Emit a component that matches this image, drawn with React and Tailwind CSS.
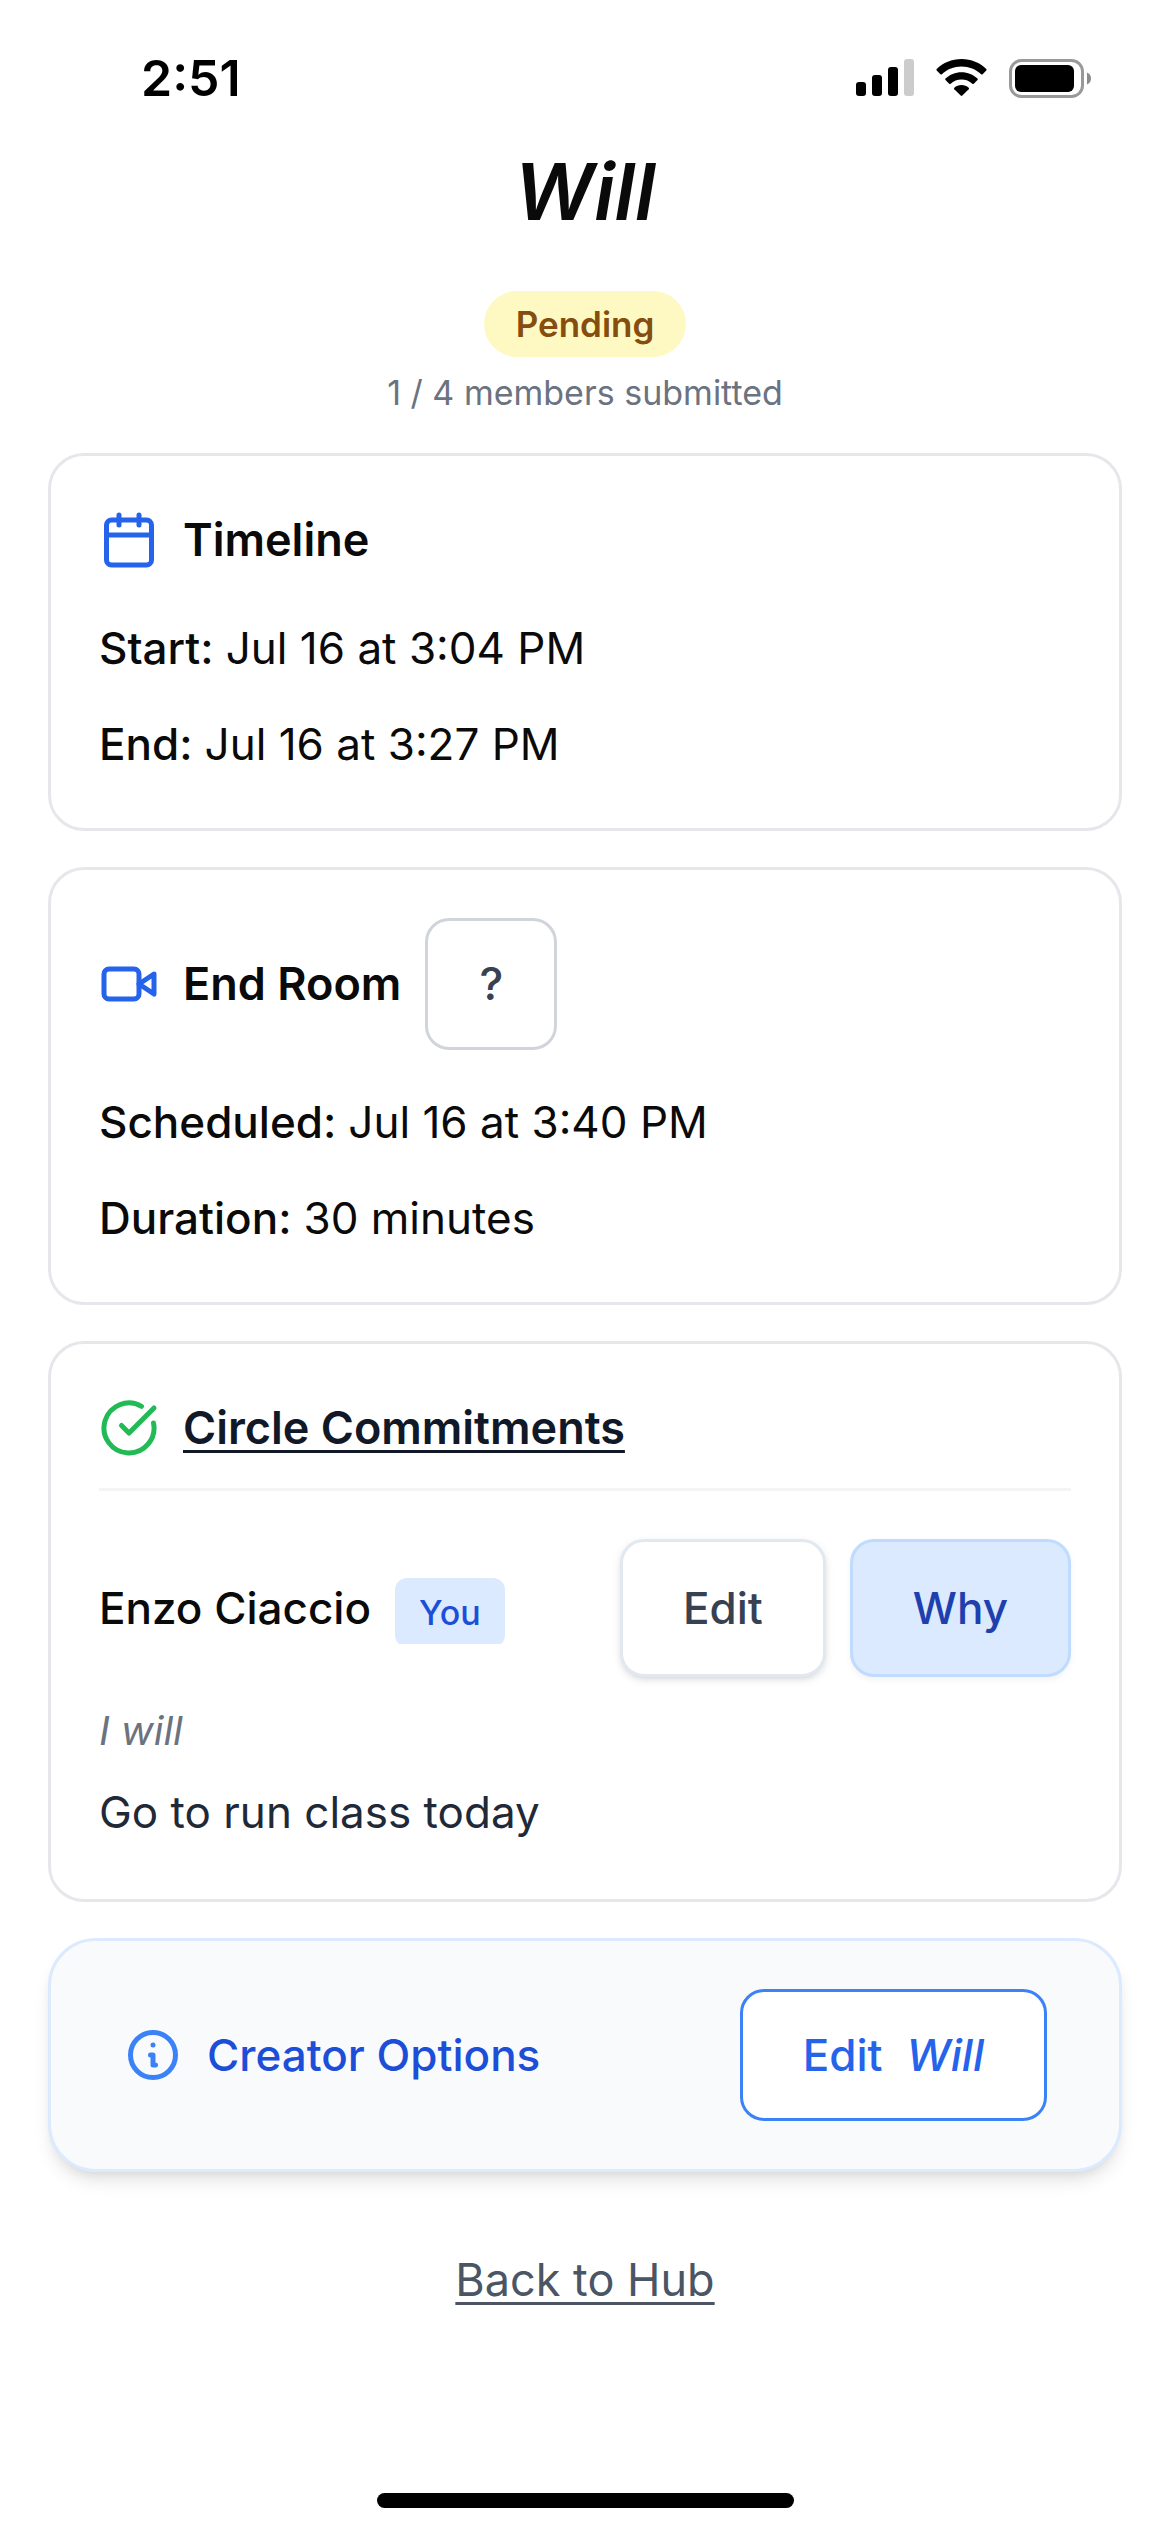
const iconProps = {
  viewBox: "0 0 24 24",
  fill: "none",
  stroke: "currentColor",
  strokeWidth: 2,
  strokeLinecap: "round",
  strokeLinejoin: "round",
  "aria-hidden": true,
};

function CalendarIcon() {
  return (
    <svg {...iconProps} className="size-15 shrink-0 text-[#2563eb]">
      <path d="M8 2v4M16 2v4M3 10h18" />
      <rect x="3" y="4" width="18" height="18" rx="2" />
    </svg>
  );
}

function VideoIcon() {
  return (
    <svg {...iconProps} className="size-15 shrink-0 text-[#2563eb]">
      <path d="m22 8-6 4 6 4V8Z" />
      <rect x="2" y="6" width="14" height="12" rx="2" />
    </svg>
  );
}

function CheckIcon() {
  return (
    <svg {...iconProps} className="size-15 shrink-0 text-[#21ba55]">
      <path d="M21.801 10A10 10 0 1 1 17 3.335" />
      <path d="m9 11 3 3L22 4" />
    </svg>
  );
}

function InfoIcon() {
  return (
    <svg {...iconProps} className="size-15 shrink-0 text-[#3b82f6]">
      <path d="M13 16h-1v-4h-1m1-4h.01M21 12a9 9 0 11-18 0 9 9 0 0118 0z" />
    </svg>
  );
}

function StatusBar() {
  return (
    <div className="flex h-[156px] items-center justify-between pr-[78px] pl-[141px]">
      <span className="text-[50px] leading-none font-semibold text-black">2:51</span>
      <div className="flex items-center">
        <svg viewBox="0 0 58 38" className="mr-[22px] h-[38px] w-[58px]" aria-hidden="true">
          <rect x="0" y="23" width="10" height="14" rx="3" />
          <rect x="16" y="16" width="10" height="21" rx="3" />
          <rect x="32" y="8" width="10" height="29" rx="3" />
          <rect x="48" y="0" width="10" height="37" rx="3" fill="#cccccc" />
        </svg>
        <svg viewBox="0 0 51 38" className="mr-[22px] h-[38px] w-[51px]" aria-hidden="true">
          <path d="M25.500 0C35.200 0 44 3.800 50.300 9.900Q51 10.700 50.300 11.500L46.600 15.200Q45.900 15.900 45.100 15.200C39.900 10.300 33 7.500 25.500 7.500S11.100 10.300 5.900 15.200Q5.100 15.900 4.400 15.200L.7 11.500Q0 10.700.7 9.900C7 3.800 15.800 0 25.500 0Z" />
          <path d="M25.500 13.200C31.700 13.200 37.300 15.600 41.500 19.500Q42.200 20.200 41.500 21L37.800 24.700Q37.100 25.400 36.300 24.700C33.500 22.100 29.700 20.500 25.500 20.500S17.500 22.100 14.700 24.700Q13.900 25.400 13.200 24.700L9.500 21Q8.800 20.200 9.500 19.500C13.700 15.600 19.300 13.200 25.500 13.200Z" />
          <path d="M25.500 26C28.300 26 30.800 27 32.700 28.700Q33.400 29.400 32.700 30.200L26.300 36.600Q25.500 37.300 24.700 36.600L18.300 30.200Q17.600 29.400 18.300 28.700C20.200 27 22.700 26 25.500 26Z" />
        </svg>
        <svg viewBox="0 0 83 39" className="h-[39px] w-[83px]" aria-hidden="true">
          <rect x="1.500" y="1.500" width="72" height="36" rx="11" fill="none" stroke="#999999" strokeWidth="3" />
          <rect x="6" y="6" width="59" height="27" rx="6" />
          <path d="M78 13.500C80.500 14.500 82 16.800 82 19.500S80.500 24.500 78 25.500Z" fill="#8c8c8c" />
        </svg>
      </div>
    </div>
  );
}

function Card({ children }) {
  return <section className="rounded-[36px] border-3 border-[#e5e7eb] bg-white p-12">{children}</section>;
}

function Fact({ label, value }) {
  return (
    <div className="flex gap-3">
      <dt className="font-medium">{label}</dt>
      <dd>{value}</dd>
    </div>
  );
}

export default function App() {
  return (
    <div className="flex min-h-screen flex-col bg-white font-[Inter,sans-serif] text-[44px] leading-[72px] text-[#0a0a0a]">
      <StatusBar />

      <main className="flex flex-1 flex-col px-12">
        <header className="flex flex-col items-center">
          <h1 className="text-[78px] leading-[72px] font-semibold italic">Will</h1>
          <span className="mt-[63px] rounded-full bg-[#fef9c3] px-8 text-[35px] leading-[66px] font-semibold text-[#854d0e]">
            Pending
          </span>
          <p className="mt-3 text-[34px] leading-[48px] text-[#6b7280]">1 / 4 members submitted</p>
        </header>

        <div className="mt-9 flex flex-col gap-9">
          <Card>
            <div className="flex items-center gap-6">
              <CalendarIcon />
              <h2 className="text-[45px] font-semibold">Timeline</h2>
            </div>
            <dl className="mt-9 flex flex-col gap-6">
              <Fact label="Start:" value="Jul 16 at 3:04 PM" />
              <Fact label="End:" value="Jul 16 at 3:27 PM" />
            </dl>
          </Card>

          <Card>
            <div className="flex items-center gap-6">
              <VideoIcon />
              <h2 className="text-[45px] font-semibold">End Room</h2>
              <button
                type="button"
                className="size-[132px] rounded-3xl border-3 border-[#d1d5db] bg-white text-[45px] font-medium text-[#374151]"
              >
                ?
              </button>
            </div>
            <dl className="mt-9 flex flex-col gap-6">
              <Fact label="Scheduled:" value="Jul 16 at 3:40 PM" />
              <Fact label="Duration:" value="30 minutes" />
            </dl>
          </Card>

          <Card>
            <div className="flex items-center gap-6 border-b-3 border-[#f3f4f6] pb-6">
              <CheckIcon />
              <h2 className="text-[45px] font-semibold text-[#111827] underline decoration-3 underline-offset-6">
                Circle Commitments
              </h2>
            </div>
            <div className="mt-12 flex items-center justify-between">
              <div className="flex h-[72px] items-start gap-6 overflow-hidden">
                <span className="font-medium">Enzo Ciaccio</span>
                <span className="mt-1.5 shrink-0 rounded-xl bg-[#dbeafe] px-6 text-[34px] leading-[69px] font-medium text-[#1d4ed8]">
                  You
                </span>
              </div>
              <div className="flex gap-6">
                <button
                  type="button"
                  className="h-[138px] rounded-3xl border-3 border-[#e2e8f0] bg-white px-[60px] font-medium text-[#374151] shadow-[0_3px_9px_rgba(0,0,0,0.1),0_3px_6px_-3px_rgba(0,0,0,0.1)]"
                >
                  Edit
                </button>
                <button
                  type="button"
                  className="h-[138px] rounded-3xl border-3 border-[#bfdbfe] bg-[#dbeafe] px-[60px] font-medium text-[#1e40af] shadow-[0_3px_6px_rgba(0,0,0,0.05)]"
                >
                  Why
                </button>
              </div>
            </div>
            <p className="mt-6 text-[40px] leading-[60px] text-[#6b7280] italic">I will</p>
            <p className="mt-3 leading-[78px] text-[#1f2937]">Go to run class today</p>
          </Card>

          <section className="flex items-center justify-between rounded-[48px] border-3 border-[#dbeafe] bg-[#f9fafb] px-[72px] py-12 shadow-[0_12px_18px_-3px_rgba(0,0,0,0.1),0_6px_12px_-6px_rgba(0,0,0,0.1)]">
            <div className="flex items-center gap-6">
              <InfoIcon />
              <h2 className="font-medium text-[#1d4ed8]">Creator Options</h2>
            </div>
            <button
              type="button"
              className="flex h-[132px] items-center gap-6 rounded-3xl border-3 border-[#3b82f6] bg-white px-[60px] font-medium text-[#2563eb]"
            >
              Edit <em>Will</em>
            </button>
          </section>
        </div>

        <a
          href="#hub"
          className="mt-[72px] self-center text-[45px] text-[#4b5563] underline decoration-3 underline-offset-6"
        >
          Back to Hub
        </a>
      </main>

      <div className="mb-6 h-[15px] w-[417px] self-center rounded-full bg-black" />
    </div>
  );
}
